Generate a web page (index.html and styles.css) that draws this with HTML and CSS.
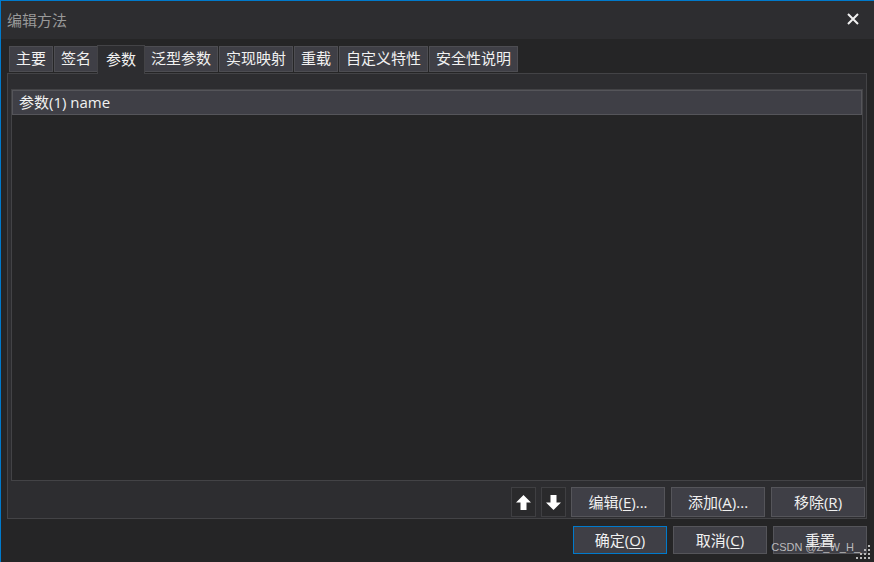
FILE: index.html
```html
<!DOCTYPE html>
<html lang="zh-CN">
<head>
  <meta charset="UTF-8">
  <title>编辑方法</title>
  <link rel="stylesheet" href="styles.css">
</head>
<body>
  <div class="window">
    <!-- Title bar -->
    <div class="titlebar">
      <span class="title">编辑方法</span>
      <svg class="close" width="12" height="12" viewBox="0 0 12 12">
        <path d="M1 1 L11 11 M11 1 L1 11" stroke="#f1f1f1" stroke-width="2" fill="none"/>
      </svg>
    </div>

    <div class="body">
      <!-- Tabs -->
      <div class="tabs">
        <div class="tab">主要</div>
        <div class="tab">签名</div>
        <div class="tab selected">参数</div>
        <div class="tab">泛型参数</div>
        <div class="tab">实现映射</div>
        <div class="tab">重载</div>
        <div class="tab">自定义特性</div>
        <div class="tab">安全性说明</div>
      </div>

      <div class="panel">
        <div class="list">
          <div class="list-head">参数(1) name</div>
        </div>
        <div class="list-actions">
          <button class="icon-btn">
            <svg width="17" height="17" viewBox="0 0 17 17"><path d="M8.5 1 L16 8.5 H11.5 V16 H5.5 V8.5 H1 Z" fill="#fff"/></svg>
          </button>
          <button class="icon-btn">
            <svg width="17" height="17" viewBox="0 0 17 17"><path d="M8.5 16 L16 8.5 H11.5 V1 H5.5 V8.5 H1 Z" fill="#fff"/></svg>
          </button>
          <button class="btn">编辑(<u>E</u>)...</button>
          <button class="btn">添加(<u>A</u>)...</button>
          <button class="btn">移除(<u>R</u>)</button>
        </div>
      </div>

      <div class="dialog-actions">
        <button class="btn primary">确定(<u>O</u>)</button>
        <button class="btn">取消(<u>C</u>)</button>
        <button class="btn">重置</button>
      </div>
    </div>

    <div class="watermark">CSDN @Z_W_H_</div>
    <svg class="grip" width="16" height="16" viewBox="0 0 16 16">
      <g fill="#bbb">
        <rect x="13" y="1" width="2" height="2"/>
        <rect x="9" y="5" width="2" height="2"/><rect x="13" y="5" width="2" height="2"/>
        <rect x="5" y="9" width="2" height="2"/><rect x="9" y="9" width="2" height="2"/><rect x="13" y="9" width="2" height="2"/>
        <rect x="1" y="13" width="2" height="2"/><rect x="5" y="13" width="2" height="2"/><rect x="9" y="13" width="2" height="2"/><rect x="13" y="13" width="2" height="2"/>
      </g>
    </svg>
  </div>
</body>
</html>
```

FILE: styles.css
```css
/* Reset */
* {
  margin: 0;
  padding: 0;
  box-sizing: border-box;
}

body {
  font-family: 'Open Sans', 'Noto Sans CJK SC', sans-serif;
  font-size: 15px;
  color: #f1f1f1;
  background: #252526;
}

.window {
  position: relative;
  width: 874px;
  height: 562px;
  border-top: 1px solid #007acc;
  border-left: 1px solid #007acc;
  background: #252526;
  display: flex;
  flex-direction: column;
  overflow: hidden;
}

.titlebar {
  height: 38px;
  background: #2d2d30;
  display: flex;
  align-items: center;
  justify-content: space-between;
  padding: 0 15px 0 6px;
}

.title {
  color: #999999;
  line-height: 1;
}

.close {
  margin-top: -2px;
}

.body {
  padding: 6px 7px 0 6px;
  display: flex;
  flex-direction: column;
}

/* Tabs */
.tabs {
  display: flex;
  align-items: flex-end;
  height: 28px;
  padding-left: 2px;
  gap: 1px;
}

.tab {
  height: 26px;
  margin-bottom: 1px;
  padding: 0 6px;
  background: #3f3f46;
  border: 1px solid #4d4d52;
  line-height: 23px;
  white-space: nowrap;
}

.tab.selected {
  position: relative;
  z-index: 1;
  height: 29px;
  margin: 0 -2px -1px -2px;
  padding: 0 8px;
  background: #2d2d30;
  border-color: #434346;
  border-bottom: none;
  line-height: 27px;
}

/* Panel */
.panel {
  height: 446px;
  background: #2d2d30;
  border: 1px solid #434346;
  padding: 15px 3px 1px 3px;
  display: flex;
  flex-direction: column;
}

.list {
  height: 392px;
  background: #252526;
  border: 1px solid #434346;
}

.list-head {
  height: 25px;
  background: #3f3f46;
  border: 1px solid #55555a;
  padding-left: 6px;
  line-height: 22px;
  white-space: nowrap;
}

.list-actions {
  margin: 6px -2px 0 0;
  display: flex;
  justify-content: flex-end;
  gap: 6px;
}

button {
  font: inherit;
  color: #f1f1f1;
  cursor: pointer;
}

.btn {
  width: 94px;
  height: 30px;
  background: #3f3f46;
  border: 1px solid #55555a;
  line-height: 26px;
  white-space: nowrap;
}

.btn u {
  text-underline-offset: 2px;
}

.icon-btn {
  width: 25px;
  height: 30px;
  background: #2a2a2c;
  border: 1px solid #3f3f42;
  display: flex;
  align-items: center;
  justify-content: center;
}

.icon-btn + .icon-btn {
  margin-left: -1px;
}

.icon-btn + .btn {
  margin-left: -1px;
}

.dialog-actions {
  margin-top: 7px;
  display: flex;
  justify-content: flex-end;
  gap: 6px;
}

.dialog-actions .btn {
  height: 28px;
  line-height: 24px;
}

.btn.primary {
  border-color: #007acc;
}

/* Overlay bits */
.watermark {
  position: absolute;
  right: 14px;
  bottom: 9px;
  font-family: 'Liberation Sans', sans-serif;
  font-size: 11px;
  color: rgba(220, 220, 220, 0.8);
}

.grip {
  position: absolute;
  right: 3px;
  bottom: 2px;
}
```
